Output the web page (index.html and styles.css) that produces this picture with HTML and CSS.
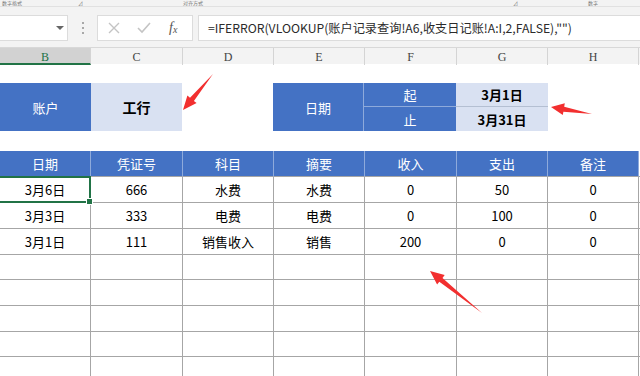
FILE: index.html
```html
<!DOCTYPE html>
<html>
<head>
<meta charset="utf-8">
<link rel="stylesheet" href="styles.css">
</head>
<body>
<div class="app">
  <div class="ribbon">
    <span class="rt r1">数字格式</span><span class="rt r2">⊿</span><span class="rt r3">对齐方式</span><span class="rt r4">⊿</span><span class="rt r5">数字</span>
  </div>
  <div class="fbar">
    <div class="namebox"><span class="caret"></span></div>
    <div class="grip"><i></i><i></i><i></i></div>
    <div class="btns">
      <svg class="ico" width="14" height="14" viewBox="0 0 14 14"><path d="M2 2 L12 12 M12 2 L2 12" stroke="#c4c4c4" stroke-width="1.4" fill="none"/></svg>
      <svg class="ico" width="16" height="14" viewBox="0 0 16 14"><path d="M2 7 L6 11 L14 2" stroke="#c4c4c4" stroke-width="1.6" fill="none"/></svg>
      <span class="fx">f<sub>x</sub></span>
    </div>
    <div class="formula">=IFERROR(VLOOKUP(账户记录查询!A6,收支日记账!A:I,2,FALSE),"")</div>
  </div>
  <div class="colhead">
    <div class="ch sel">B</div><div class="ch">C</div><div class="ch">D</div><div class="ch">E</div><div class="ch">F</div><div class="ch">G</div><div class="ch">H</div><div class="ch last"></div>
  </div>
  <div class="sheet">
    <div class="gap1"></div>
    <div class="info">
      <div class="blue acct">账户</div>
      <div class="pale bank">工行</div>
      <div class="blue datelbl">日期</div>
      <div class="blue from">起</div>
      <div class="blue to">止</div>
      <div class="pale fromv">3月1日</div>
      <div class="pale tov">3月31日</div>
    </div>
    <div class="gap2"></div>
    <div class="table">
      <div class="th">日期</div><div class="th">凭证号</div><div class="th">科目</div><div class="th">摘要</div><div class="th">收入</div><div class="th">支出</div><div class="th">备注</div><div class="td edge"></div>

      <div class="td active">3月6日</div><div class="td">666</div><div class="td">水费</div><div class="td">水费</div><div class="td">0</div><div class="td">50</div><div class="td">0</div><div class="td edge"></div>

      <div class="td">3月3日</div><div class="td">333</div><div class="td">电费</div><div class="td">电费</div><div class="td">0</div><div class="td">100</div><div class="td">0</div><div class="td edge"></div>

      <div class="td">3月1日</div><div class="td">111</div><div class="td">销售收入</div><div class="td">销售</div><div class="td">200</div><div class="td">0</div><div class="td">0</div><div class="td edge"></div>

      <div class="td"></div><div class="td"></div><div class="td"></div><div class="td"></div><div class="td"></div><div class="td"></div><div class="td"></div><div class="td edge"></div>
      <div class="td"></div><div class="td"></div><div class="td"></div><div class="td"></div><div class="td"></div><div class="td"></div><div class="td"></div><div class="td edge"></div>
      <div class="td"></div><div class="td"></div><div class="td"></div><div class="td"></div><div class="td"></div><div class="td"></div><div class="td"></div><div class="td edge"></div>
      <div class="td"></div><div class="td"></div><div class="td"></div><div class="td"></div><div class="td"></div><div class="td"></div><div class="td"></div><div class="td edge"></div>
      <div class="td"></div><div class="td"></div><div class="td"></div><div class="td"></div><div class="td"></div><div class="td"></div><div class="td"></div><div class="td edge"></div>
    </div>
  </div>
  <svg class="arrows" width="640" height="376" viewBox="0 0 640 376">
    <polygon fill="#f22f2f" points="213,74 193.9,100.9 196.6,103.1 183,110 187.4,95.4 190.0,97.7"/>
    <polygon fill="#f22f2f" points="592,114 564.2,106.7 564.8,103.3 551,107 562.8,115.1 563.4,111.7"/>
    <polygon fill="#f22f2f" points="482,313 442.5,277.9 444.7,275.1 430,271 437.1,284.5 439.3,281.8"/>
  </svg>
</div>
</body>
</html>
```

FILE: styles.css
```css
* { box-sizing: border-box; }
html, body { margin: 0; padding: 0; background: #fff; }
body { font-family: "Noto Sans CJK SC", "Microsoft YaHei", sans-serif; font-size: 13px; color: #000; }
.app { position: relative; width: 640px; height: 376px; overflow: hidden; }

.ribbon { height: 7px; background: #f3f3f3; border-bottom: 1px solid #e1e1e1; display: flex; align-items: flex-start; overflow: hidden; }
.rt { font-size: 5px; line-height: 6px; color: #777; white-space: nowrap; }
.r1 { margin-left: 2px; }
.r2 { margin-left: 56px; }
.r3 { margin-left: 100px; }
.r4 { margin-left: 310px; }
.r5 { margin-left: 70px; }

.fbar { height: 40px; background: #f3f3f3; display: flex; align-items: center; padding-top: 1px; }
.namebox { width: 68px; height: 26px; background: #fff; border: 1px solid #dcdcdc; border-left: none; position: relative; }
.caret { position: absolute; left: 56px; top: 10px; border-left: 4px solid transparent; border-right: 4px solid transparent; border-top: 4px solid #666; }
.grip { width: 29px; display: flex; flex-direction: column; align-items: center; gap: 3px; }
.grip i { width: 2px; height: 2px; background: #a8a8a8; display: block; }
.btns { width: 96px; height: 26px; background: #fff; border: 1px solid #dcdcdc; display: flex; align-items: center; padding-left: 9px; }
.btns .ico:first-child { margin-right: 15px; }
.btns .ico:nth-child(2) { margin-right: 17px; }
.fx { font-family: "Liberation Serif", serif; font-style: italic; font-size: 14px; color: #555; line-height: 1; }
.fx sub { font-size: 10px; vertical-align: -1px; }
.formula { flex: 1; height: 26px; margin-left: 5px; background: #fff; border: 1px solid #dcdcdc; border-right: none; padding-left: 9px; line-height: 24px; font-size: 12.2px; color: #2b2b2b; white-space: nowrap; overflow: hidden; }

.colhead { height: 17px; display: grid; grid-template-columns: 91px 92px 91px 91px 92px 91px 91px 1fr; background: #f3f3f3; border-top: 1px solid #d8d8d8; }
.ch { font-family: "Liberation Serif", serif; font-size: 12px; color: #444; text-align: center; line-height: 19px; border-right: 1px solid #d4d4d4; height: 17px; }
.ch.sel { background: #d2d2d2; color: #217346; border-bottom: 2px solid #217346; line-height: 19px; }
.ch.last { border-right: none; }

.sheet { background: #fff; }
.gap1 { height: 19px; }
.gap2 { height: 20px; }

.info { display: grid; grid-template-columns: 91px 91px 91px 91px 92px 92px; grid-template-rows: 24px 24px; }
.blue { background: #4472c4; color: #fff; display: flex; align-items: center; justify-content: center; }
.pale { background: #d9e1f2; color: #000; font-weight: bold; display: flex; align-items: center; justify-content: center; }
.acct { grid-column: 1; grid-row: 1 / 3; }
.bank { grid-column: 2; grid-row: 1 / 3; font-size: 14px; }
.datelbl { grid-column: 4; grid-row: 1 / 3; border-right: 1px solid #8eaadb; }
.from { grid-column: 5; grid-row: 1; border-bottom: 1px solid #8eaadb; }
.to { grid-column: 5; grid-row: 2; }
.fromv { grid-column: 6; grid-row: 1; border-bottom: 1px solid #b4bfd2; }
.tov { grid-column: 6; grid-row: 2; }

.table { display: grid; grid-template-columns: 91px 92px 91px 91px 92px 91px 91px 1fr; grid-template-rows: 26px 26px 26px 26px 25px 26px 26px 25px 26px; }
.th { background: #4472c4; color: #fff; display: flex; align-items: center; justify-content: center; border-right: 1px solid #8eaadb; border-bottom: 1px solid #a6a6a6; }
.td { display: flex; align-items: center; justify-content: center; border-right: 1px solid #a6a6a6; border-bottom: 1px solid #a6a6a6; }
.td.edge { border-right: none; }
.active { position: relative; }
.active::before { content: ""; position: absolute; left: -1px; top: -1px; right: -1px; bottom: -1px; border: 2px solid #217346; border-left: none; }
.active::after { content: ""; position: absolute; right: -3px; bottom: -3px; width: 5px; height: 5px; background: #217346; border: 1px solid #fff; }

.arrows { position: absolute; left: 0; top: 0; pointer-events: none; }
```
